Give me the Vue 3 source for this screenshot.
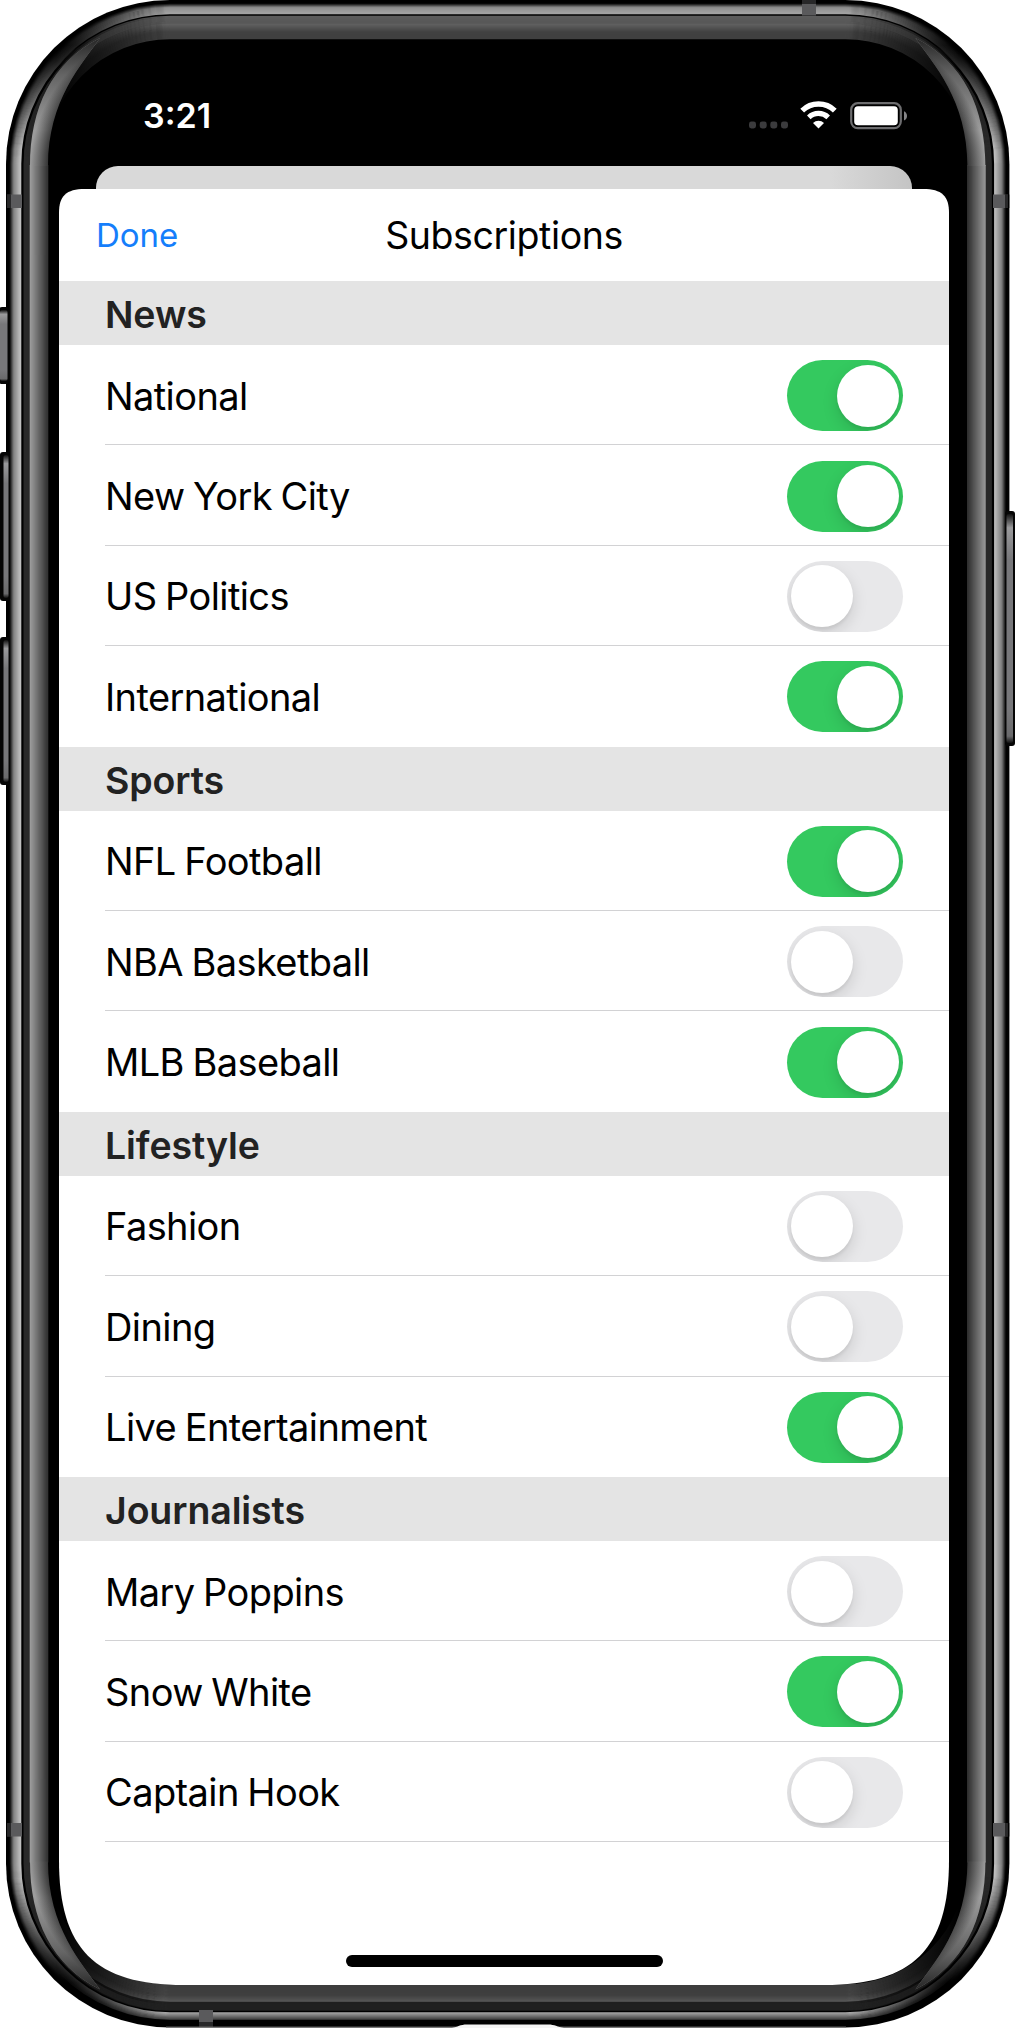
<template>
  <div class="phone">
    <svg class="frame" width="1015" height="2028" viewBox="0 0 1015 2028">
      <defs>
        <linearGradient id="fadeY" gradientUnits="userSpaceOnUse" x1="0" y1="0" x2="0" y2="2028">
          <stop offset="0.022" stop-color="#000" />
          <stop offset="0.035" stop-color="#444" />
          <stop offset="0.075" stop-color="#fff" />
          <stop offset="0.925" stop-color="#fff" />
          <stop offset="0.965" stop-color="#444" />
          <stop offset="0.978" stop-color="#000" />
        </linearGradient>
        <linearGradient id="fadeX" gradientUnits="userSpaceOnUse" x1="6" y1="0" x2="1009" y2="0">
          <stop offset="0.05" stop-color="#000" />
          <stop offset="0.09" stop-color="#555" />
          <stop offset="0.16" stop-color="#fff" />
          <stop offset="0.84" stop-color="#fff" />
          <stop offset="0.91" stop-color="#555" />
          <stop offset="0.95" stop-color="#000" />
        </linearGradient>
        <linearGradient id="key" x1="0" y1="0" x2="0" y2="1">
          <stop offset="0" stop-color="#111" />
          <stop offset="0.06" stop-color="#9a9a9c" />
          <stop offset="0.2" stop-color="#77777a" />
          <stop offset="0.85" stop-color="#77777a" />
          <stop offset="0.97" stop-color="#6a6a6c" />
          <stop offset="1" stop-color="#111" />
        </linearGradient>
        <radialGradient id="glint" gradientUnits="userSpaceOnUse" cx="175" cy="170" r="145">
          <stop offset="0.7" stop-color="#1c1c1c" />
          <stop offset="0.876" stop-color="#343434" />
          <stop offset="1" stop-color="#9c9c9c" />
        </radialGradient>
        <linearGradient id="glintShade" gradientUnits="userSpaceOnUse" x1="0" y1="38" x2="0" y2="130">
          <stop offset="0" stop-color="#111" stop-opacity="0.85" />
          <stop offset="0.4" stop-color="#111" stop-opacity="0.4" />
          <stop offset="1" stop-color="#111" stop-opacity="0" />
        </linearGradient>
        <mask id="maskSides" maskUnits="userSpaceOnUse" x="0" y="0" width="1015" height="2028">
          <rect width="1015" height="2028" fill="url(#fadeY)" />
        </mask>
        <mask id="maskTop" maskUnits="userSpaceOnUse" x="0" y="0" width="1015" height="1000">
          <rect width="1015" height="1000" fill="url(#fadeX)" />
        </mask>
        <mask id="maskBottom" maskUnits="userSpaceOnUse" x="0" y="1000" width="1015" height="1028">
          <rect y="1000" width="1015" height="1028" fill="url(#fadeX)" />
        </mask>
        <clipPath id="clipStraight">
          <rect x="0" y="165" width="1015" height="1697.5" />
        </clipPath>
      </defs>

      <rect x="6" y="0" width="1003.4" height="2027.5" rx="164" fill="#000" />
      <rect v-bind="ring(20.5)" fill="none" stroke="#191919" stroke-width="6" />

      <g mask="url(#maskSides)" fill="none">
        <rect v-for="r in sideRings" :key="r.inset" v-bind="ring(r.inset)" :stroke="r.color" stroke-width="1.6" />
      </g>
      <g mask="url(#maskTop)" fill="none">
        <rect v-for="r in topRings" :key="r.inset" v-bind="ring(r.inset)" :stroke="r.color" stroke-width="1.6" />
      </g>
      <g mask="url(#maskBottom)" fill="none">
        <rect v-for="r in bottomRings" :key="r.inset" v-bind="ring(r.inset)" :stroke="r.color" stroke-width="1.6" />
      </g>
      <g clip-path="url(#clipStraight)" fill="none">
        <rect v-for="r in bezelRings" :key="r.inset" v-bind="ring(r.inset)" :stroke="r.color" stroke-width="1.6" />
      </g>

      <!-- reflections in the four corners of the bezel -->
      <g v-for="t in corners" :key="t" :transform="t">
        <path :d="glint" fill="url(#glint)" />
        <path :d="glint" fill="url(#glintShade)" />
      </g>

      <!-- side keys -->
      <g v-for="key in keys" :key="key.y">
        <rect :x="key.x" :y="key.y" width="10" :height="key.h" rx="3" fill="#050505" />
        <rect :x="key.inner" :y="key.y + 3" :width="key.w" :height="key.h - 6" rx="2" fill="url(#key)" />
      </g>

      <!-- antenna bands -->
      <g fill="#5a5a5c">
        <rect x="7" y="194.5" width="15" height="13.5" />
        <rect x="993" y="194.5" width="15" height="13.5" />
        <rect x="7" y="1823" width="15" height="13.5" />
        <rect x="993" y="1823" width="15" height="13.5" />
        <rect x="802" y="0" width="14" height="15.5" />
        <rect x="199" y="2010" width="14" height="17" />
      </g>
      <g fill="#000" opacity="0.55">
        <rect x="6" y="194.5" width="5" height="13.5" />
        <rect x="1005" y="194.5" width="4.5" height="13.5" />
        <rect x="6" y="1823" width="5" height="13.5" />
        <rect x="1005" y="1823" width="4.5" height="13.5" />
        <rect x="802" y="0" width="14" height="4" />
        <rect x="199" y="2022" width="14" height="5" />
      </g>
      <rect x="166" y="2026.6" width="680" height="1.4" fill="#777" />
      <path d="M452 2028C458 2027 460 2024.6 467 2024.6H548C555 2024.6 557 2027 564 2028Z" fill="#f4f4f4" />
    </svg>

    <div class="screen">
      <div class="status-bar">
        <span class="time">3:21</span>
        <div class="status-icons">
          <svg class="dots" width="40" height="8" viewBox="0 0 40 8" fill="#3b3b3d">
            <rect x="0" y="0.5" width="7" height="7" rx="2.4" />
            <rect x="10.7" y="0.5" width="7" height="7" rx="2.4" />
            <rect x="21.3" y="0.5" width="7" height="7" rx="2.4" />
            <rect x="32" y="0.5" width="7" height="7" rx="2.4" />
          </svg>
          <svg class="wifi" width="37" height="28" viewBox="0 0 37 28" fill="none" stroke="#fff">
            <path d="M2.2 9.6A23.4 23.4 0 0 1 34.8 9.6" stroke-width="5.4" />
            <path d="M8.8 16.3A14.2 14.2 0 0 1 28.2 16.3" stroke-width="5.2" />
            <path d="M18.5 27.6L13 22A8 8 0 0 1 24 22Z" fill="#fff" stroke="none" />
          </svg>
          <svg class="battery" width="57" height="28" viewBox="0 0 57 28">
            <rect x="1.2" y="1.2" width="49.6" height="25" rx="6.6" fill="none" stroke="#6d6d6f" stroke-width="2.2" />
            <rect x="4.2" y="4.2" width="43.6" height="19" rx="3.8" fill="#fff" />
            <path d="M54 9.2C58 11 58 16.8 54 18.6Z" fill="#858587" />
          </svg>
        </div>
      </div>

      <div class="back-card"></div>

      <div class="sheet">
        <div class="nav">
          <button class="done">Done</button>
          <h1 class="title">Subscriptions</h1>
        </div>

        <div v-for="section in sections" :key="section.name" class="section">
          <h2 class="section-title">{{ section.name }}</h2>
          <div v-for="item in section.items" :key="item.label" class="row">
            <span class="row-label">{{ item.label }}</span>
            <span class="toggle" :class="{ 'on': item.on }" @click="item.on = !item.on">
              <span class="knob"></span>
            </span>
          </div>
        </div>

        <div class="home">
          <div class="home-indicator"></div>
        </div>
      </div>
    </div>
  </div>
</template>

<script setup>
import { ref } from 'vue'

const sections = ref([
  {
    name: 'News',
    items: [
      { label: 'National', on: true },
      { label: 'New York City', on: true },
      { label: 'US Politics', on: false },
      { label: 'International', on: true }
    ]
  },
  {
    name: 'Sports',
    items: [
      { label: 'NFL Football', on: true },
      { label: 'NBA Basketball', on: false },
      { label: 'MLB Baseball', on: true }
    ]
  },
  {
    name: 'Lifestyle',
    items: [
      { label: 'Fashion', on: false },
      { label: 'Dining', on: false },
      { label: 'Live Entertainment', on: true }
    ]
  },
  {
    name: 'Journalists',
    items: [
      { label: 'Mary Poppins', on: false },
      { label: 'Snow White', on: true },
      { label: 'Captain Hook', on: false }
    ]
  }
])

const keys = [
  { x: -1, y: 307, h: 77, inner: 0, w: 7.5 },
  { x: 0, y: 452, h: 149, inner: 3.5, w: 5 },
  { x: 0, y: 637, h: 148, inner: 3.5, w: 5 },
  { x: 1005, y: 511, h: 235, inner: 1006.5, w: 6.5 }
]

const glint = 'M30 166C30 108 52 62 100 38C82 64 48 100 48 166Z'

const corners = [
  'translate(0 0)',
  'translate(1015.4 0) scale(-1 1)',
  'translate(0 2027.5) scale(1 -1)',
  'translate(1015.4 2027.5) scale(-1 -1)'
]

// rounded outline of the case, moved inwards by inset
const ring = (inset) => ({
  x: 6 + inset,
  y: inset,
  width: 1003.4 - inset * 2,
  height: 2027.5 - inset * 2,
  rx: 164 - inset
})

// one-pixel rings from inset `from` to `to`, fading between two greys
const band = (from, to, start, end) => {
  const rings = []
  for (let i = from; i < to; i++) {
    const v = Math.round(start + ((end - start) * (i - from)) / Math.max(1, to - from - 1))
    rings.push({ inset: i + 0.5, color: `rgb(${v}, ${v}, ${v})` })
  }
  return rings
}

const sideRings = [
  ...band(4, 8, 20, 115),
  ...band(8, 15, 135, 190),
  ...band(18, 24, 42, 42)
]

const bezelRings = band(24, 42, 156, 52)

const topRings = [
  ...band(4, 8, 30, 135),
  ...band(8, 14, 145, 162),
  ...band(16, 24, 92, 88),
  ...band(24, 32, 96, 68),
  ...band(32, 39, 66, 64)
]

const bottomRings = [
  ...band(8, 15, 70, 165),
  ...band(17, 26, 34, 34),
  ...band(26, 32, 92, 72),
  ...band(32, 43, 68, 66)
]
</script>

<style>
body {
  margin: 0;
  background: #fff;
}
</style>

<style scoped>
.phone {
  display: grid;
  width: 1015px;
  height: 2028px;
  overflow: hidden;
  font-family: Inter, 'Liberation Sans', sans-serif;
  color: #000;
}

.frame,
.screen {
  grid-area: 1 / 1;
}

.screen {
  display: flex;
  flex-direction: column;
  width: 890px;
  height: 1946px;
  margin: 39px 0 0 59px;
}

.status-bar {
  display: flex;
  justify-content: space-between;
  box-sizing: border-box;
  height: 127px;
  padding: 56px 42px 0 84px;
}

.time {
  font-size: 34px;
  line-height: 41px;
  font-weight: 600;
  color: #fff;
}

.status-icons {
  display: flex;
  align-items: flex-start;
  padding-top: 6px;
}

.dots {
  margin: 20px 11px 0 0;
}

.wifi {
  margin-right: 13px;
}

.battery {
  margin-top: 1px;
}

.back-card {
  height: 23px;
  margin: 0 37px;
  border-radius: 22px 22px 0 0;
  background: linear-gradient(90deg, #d9d9d9 90%, #c4c4c4);
}

.sheet {
  display: flex;
  flex-direction: column;
  height: 1796px;
  background: #fff;
  clip-path: path('M0 24C0 7 7 0 26 0H864C883 0 890 7 890 24V1671C890 1760 854 1796 765 1796H125C36 1796 0 1760 0 1671Z');
}

.nav {
  display: grid;
  grid-template-columns: 1fr auto 1fr;
  align-items: center;
  height: 92px;
  flex-shrink: 0;
}

.done {
  justify-self: start;
  padding: 0;
  margin-left: 37px;
  border: none;
  background: none;
  font-family: inherit;
  font-size: 33px;
  color: #157efb;
  cursor: pointer;
}

.title {
  margin: 0;
  font-size: 37.5px;
  font-weight: 400;
  letter-spacing: -0.4px;
}

.section-title {
  box-sizing: border-box;
  height: 64px;
  margin: 0;
  padding-left: 46px;
  background: #e4e4e4;
  font-size: 37.5px;
  line-height: 67px;
  font-weight: 600;
  letter-spacing: -0.1px;
  color: #222;
}

.row {
  display: flex;
  align-items: center;
  justify-content: space-between;
  box-sizing: border-box;
  height: 100.4px;
  margin-left: 46px;
  padding: 2px 46px 0 0;
  border-bottom: 1px solid #d2d2d4;
}

.section:not(:nth-last-child(2)) .row:last-child {
  border-bottom-color: transparent;
}

.row-label {
  font-size: 38px;
  letter-spacing: -0.6px;
  word-spacing: -1.5px;
}

.toggle {
  display: flex;
  box-sizing: border-box;
  width: 116.5px;
  height: 71px;
  padding: 4.5px;
  border-radius: 36px;
  background: #e8e8ea;
  overflow: hidden;
  cursor: pointer;
}

.toggle.on {
  justify-content: flex-end;
  background: #34c95f;
}

.knob {
  width: 62px;
  height: 62px;
  border-radius: 50%;
  background: #fff;
  box-shadow: 0 6px 16px rgba(0, 0, 0, 0.13), 0 3px 3px rgba(0, 0, 0, 0.05);
}

.home {
  display: flex;
  flex: 1;
  align-items: flex-end;
  justify-content: center;
  padding-bottom: 18px;
}

.home-indicator {
  width: 317px;
  height: 12px;
  border-radius: 6px;
  background: #000;
}
</style>
